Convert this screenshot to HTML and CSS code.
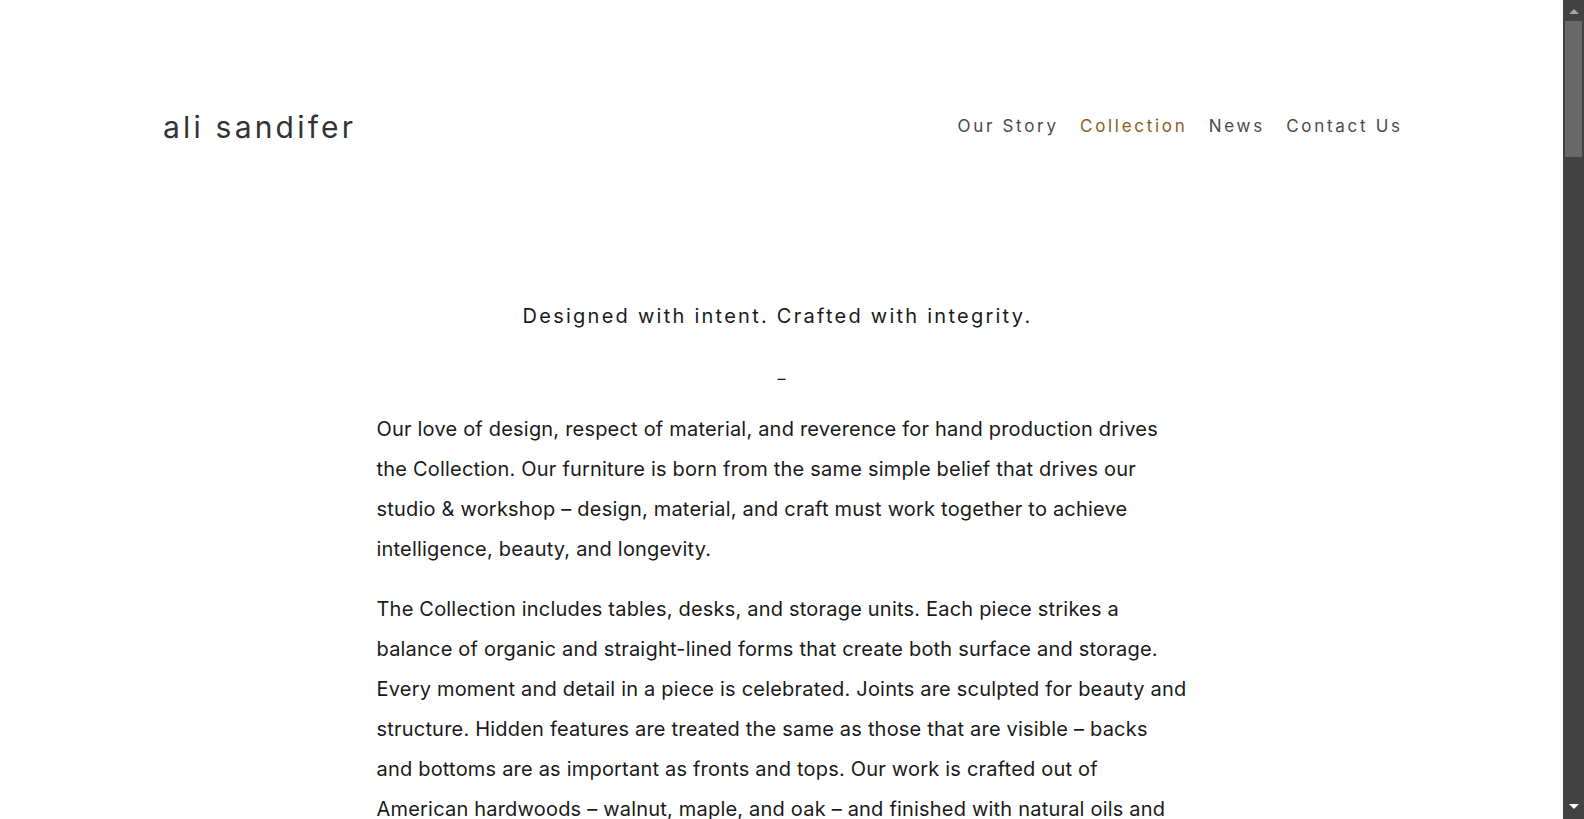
FILE: index.html
```html
<!DOCTYPE html>
<html lang="en">
<head>
<meta charset="utf-8">
<title>Collection — ali sandifer</title>
<link rel="stylesheet" href="styles.css">
</head>
<body>
<div class="page">
  <header class="site-header">
    <a class="logo" href="#">ali sandifer</a>
    <nav class="nav">
      <a href="#" class="nav-link">Our Story</a>
      <a href="#" class="nav-link active">Collection</a>
      <a href="#" class="nav-link">News</a>
      <a href="#" class="nav-link">Contact Us</a>
    </nav>
  </header>
  <main class="content">
    <h1 class="tagline">Designed with intent. Crafted with integrity.</h1>
    <div class="divider">–</div>
    <p class="copy">Our love of design, respect of material, and reverence for hand production drives<br>the Collection. Our furniture is born from the same simple belief that drives our<br>studio &amp; workshop – design, material, and craft must work together to achieve<br>intelligence, beauty, and longevity.</p>
    <p class="copy">The Collection includes tables, desks, and storage units. Each piece strikes a<br>balance of organic and straight-lined forms that create both surface and storage.<br>Every moment and detail in a piece is celebrated. Joints are sculpted for beauty and<br>structure. Hidden features are treated the same as those that are visible – backs<br>and bottoms are as important as fronts and tops. Our work is crafted out of<br>American hardwoods – walnut, maple, and oak – and finished with natural oils and<br>waxes.</p>
  </main>
</div>
<div class="scrollbar">
  <div class="sb-button sb-up">
    <svg width="10" height="5" viewBox="0 0 10 5"><polygon points="0,5 10,5 5,0" fill="#a3a3a3"/></svg>
  </div>
  <div class="sb-track">
    <div class="sb-thumb"></div>
  </div>
  <div class="sb-button sb-down">
    <svg width="10" height="5" viewBox="0 0 10 5"><polygon points="0,0 10,0 5,5" fill="#ffffff"/></svg>
  </div>
</div>
</body>
</html>
```
FILE: styles.css
```css
html, body {
  margin: 0;
  height: 100%;
  overflow: hidden;
  background: #fff;
}
body {
  display: flex;
  align-items: stretch;
  font-family: Inter, "Liberation Sans", sans-serif;
  color: #1a1a1a;
}
a {
  text-decoration: none;
  color: inherit;
}
.page {
  flex: 1;
  min-width: 0;
  overflow: hidden;
}
.site-header {
  max-width: 1237px;
  margin: 0 auto;
  padding-top: 107px;
  display: flex;
  justify-content: space-between;
  align-items: flex-start;
}
.logo {
  font-size: 30px;
  line-height: 40px;
  letter-spacing: 3.2px;
  color: #333;
}
.nav {
  display: flex;
  gap: 24px;
  margin-top: -1px;
}
.nav-link {
  font-size: 17px;
  line-height: 40px;
  letter-spacing: 2.7px;
  color: #4a4a4a;
  margin-right: -2.7px;
}
.nav-link.active {
  color: #8b5c1f;
}
.content {
  max-width: 810px;
  margin: 0 auto;
  padding-top: 155px;
}
.tagline {
  margin: 0;
  padding-right: 8px;
  font-weight: 400;
  font-size: 20px;
  line-height: 28px;
  letter-spacing: 2.25px;
  text-align: center;
  color: #1a1a1a;
}
.divider {
  text-align: center;
  font-size: 16px;
  line-height: 24px;
  margin: 36px 0 19px;
}
.copy {
  margin: 0 -16px 20px 0;
  font-size: 20px;
  line-height: 40px;
  letter-spacing: 0.2px;
}
.scrollbar {
  width: 21px;
  flex: none;
  height: 100vh;
  background: #424242;
  display: flex;
  flex-direction: column;
}
.sb-button {
  height: 19px;
  display: flex;
  justify-content: center;
  flex: none;
}
.sb-up {
  align-items: flex-end;
  padding-bottom: 5px;
  box-sizing: border-box;
}
.sb-down {
  align-items: flex-start;
  padding-top: 4px;
  box-sizing: border-box;
}
.sb-track {
  flex: 1;
  padding: 2px 2px 0;
}
.sb-thumb {
  height: 136px;
  background: #686868;
}
```
